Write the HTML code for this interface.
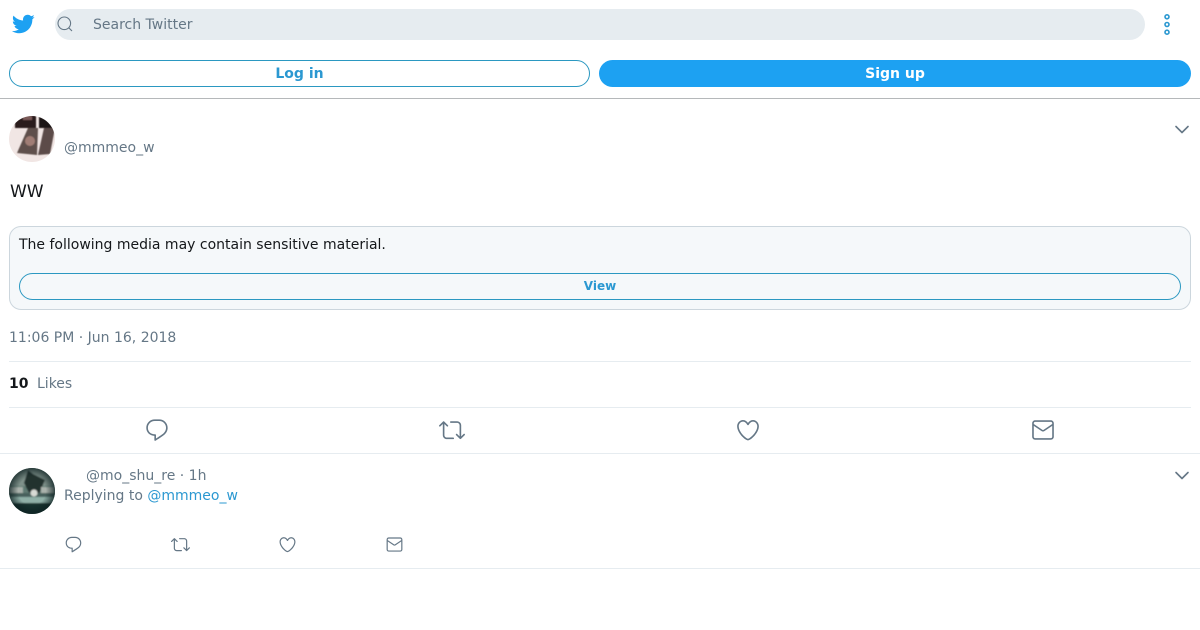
<!DOCTYPE html>
<html lang="en"><head><meta charset="utf-8"><title>Tweet</title>
<style>
html,body{margin:0;padding:0;background:#fff;width:1200px;height:630px;overflow:hidden}
body{position:relative;font-family:"DejaVu Sans",sans-serif;color:#14171a}
.a{position:absolute;white-space:nowrap}
.g{color:#657786}
.b{color:#2b98d1}
.line{position:absolute;height:1px;background:#e6ecf0}
svg{position:absolute;display:block}
.ic{fill:#657786}
</style></head><body>
<svg style="left:11px;top:12px" width="24" height="24" viewBox="0 0 24 24"><path fill="#1da1f2" d="M23.643 4.937c-.835.37-1.732.62-2.675.727.962-.576 1.7-1.49 2.048-2.578-.9.534-1.897.922-2.958 1.13-.85-.904-2.06-1.47-3.4-1.47-2.572 0-4.658 2.086-4.658 4.66 0 .364.042.718.12 1.06-3.873-.195-7.304-2.05-9.602-4.868-.4.69-.63 1.49-.63 2.342 0 1.616.823 3.043 2.072 3.878-.764-.025-1.482-.234-2.11-.583v.06c0 2.257 1.605 4.14 3.737 4.568-.392.106-.803.162-1.227.162-.3 0-.593-.028-.877-.082.593 1.85 2.313 3.198 4.352 3.234-1.595 1.25-3.604 1.995-5.786 1.995-.376 0-.747-.022-1.112-.065 2.062 1.323 4.51 2.093 7.14 2.093 8.57 0 13.255-7.098 13.255-13.254 0-.2-.005-.402-.014-.602.91-.658 1.7-1.477 2.323-2.41z"/></svg>
<div class="a" style="left:55px;top:9px;width:1090px;height:31px;border-radius:16px;background:#e6ecf0"></div>
<svg style="left:56px;top:15px" width="18" height="18" viewBox="0 0 18 18" fill="none" stroke="#657786" stroke-width="1.1"><circle cx="8.3" cy="8.3" r="6.3"/><path d="M12.8 12.8l3.2 3.2"/></svg>
<div class="a g" style="left:93px;top:16px;font-size:14px;line-height:18px">Search Twitter</div>
<svg style="left:1161px;top:13px" width="12" height="24" viewBox="0 0 12 24" fill="none" stroke="#2b98d1" stroke-width="1.6"><circle cx="6" cy="3.8" r="2"/><circle cx="6" cy="11.5" r="2"/><circle cx="6" cy="19.2" r="2"/></svg>

<div class="a" style="left:9px;top:60px;width:579px;height:25px;border:1px solid #2b98c1;border-radius:14px;text-align:center;font-size:14px;font-weight:700;line-height:27px;color:#2b98d1">Log in</div>
<div class="a" style="left:599px;top:60px;width:592px;height:27px;border-radius:14px;background:#1da1f2;text-align:center;font-size:14px;font-weight:700;line-height:29px;color:#fff">Sign up</div>
<div class="line" style="left:0;top:98px;width:1200px;background:#b5b8ba"></div>

<svg style="left:9px;top:116px" width="46" height="46" viewBox="0 0 46 46"><defs><clipPath id="c1"><circle cx="23" cy="23" r="23"/></clipPath><filter id="f1"><feGaussianBlur stdDeviation=".6"/></filter></defs><g clip-path="url(#c1)"><rect width="46" height="46" fill="#f1e6e4"/><g filter="url(#f1)"><rect x="6" y="-2" width="21" height="14" fill="#2a1a1e"/><rect x="30" y="-2" width="16" height="14" fill="#1f1518"/><rect x="14" y="0" width="9" height="4" fill="#7a5a58"/><path d="M19 12L29 12 28 39 8 37Z" fill="#5f504b"/><path d="M35 12L46 12 41 38 29 39Z" fill="#5b4c48"/><circle cx="21" cy="25" r="5" fill="#a07d74"/></g></g></svg>
<div class="a g" style="left:64px;top:139px;font-size:14px;line-height:18px">@mmmeo_w</div>
<svg style="left:1174px;top:124px" width="16" height="12" viewBox="0 0 16 12" fill="none" stroke="#657786" stroke-width="1.6" stroke-linecap="round" stroke-linejoin="round"><path d="M2 2.5l6 6 6-6"/></svg>

<div class="a" style="left:10px;top:182px;font-size:17px;line-height:20px">WW</div>

<div class="a" style="left:9px;top:226px;width:1180px;height:82px;border:1px solid #ccd6dd;border-radius:12px;background:#f5f8fa"></div>
<div class="a" style="left:19px;top:236px;font-size:14px;line-height:18px">The following media may contain sensitive material.</div>
<div class="a" style="left:19px;top:273px;width:1160px;height:25px;border:1px solid #2b98c1;border-radius:14px;text-align:center;font-size:12px;font-weight:700;line-height:25px;color:#2b98d1">View</div>

<div class="a g" style="left:9px;top:329px;font-size:14px;line-height:18px">11:06 PM · Jun 16, 2018</div>
<div class="line" style="left:9px;top:361px;width:1182px"></div>
<div class="a" style="left:9px;top:375px;font-size:14px;line-height:18px;font-weight:700">10</div>
<div class="a g" style="left:37px;top:375px;font-size:14px;line-height:18px">Likes</div>
<div class="line" style="left:9px;top:407px;width:1182px"></div>

<svg class="ic" style="left:144px;top:417px" width="26" height="26" viewBox="0 0 24 24"><path d="M14.046 2.242l-4.148-.01h-.002c-4.374 0-7.8 3.427-7.8 7.802 0 4.098 3.186 7.206 7.465 7.37v3.828c0 .108.044.286.12.403.142.225.384.347.632.347.138 0 .277-.038.402-.118.264-.168 6.473-4.14 8.088-5.506 1.902-1.61 3.04-3.97 3.043-6.312v-.017c-.006-4.367-3.43-7.787-7.8-7.788zm3.787 12.972c-1.134.96-4.862 3.405-6.772 4.643V16.67c0-.414-.335-.75-.75-.75h-.396c-3.66 0-6.318-2.476-6.318-5.886 0-3.534 2.768-6.302 6.3-6.302l4.147.01h.002c3.532 0 6.3 2.766 6.302 6.296-.003 1.91-.942 3.844-2.514 5.176z"/></svg>
<svg class="ic" style="left:439px;top:417px" width="26" height="26" viewBox="0 0 24 24"><path d="M23.77 15.67c-.292-.293-.767-.293-1.06 0l-2.22 2.22V7.65c0-2.068-1.683-3.75-3.75-3.75h-5.85c-.414 0-.75.336-.75.75s.336.75.75.75h5.85c1.24 0 2.25 1.01 2.25 2.25v10.24l-2.22-2.22c-.293-.293-.768-.293-1.06 0s-.294.768 0 1.06l3.5 3.5c.145.147.337.22.53.22s.383-.072.53-.22l3.5-3.5c.294-.292.294-.767 0-1.06zm-10.66 3.28H7.26c-1.24 0-2.25-1.01-2.25-2.25V6.46l2.22 2.22c.148.147.34.22.532.22s.384-.073.53-.22c.293-.293.293-.768 0-1.06l-3.5-3.5c-.293-.294-.768-.294-1.06 0l-3.5 3.5c-.294.292-.294.767 0 1.06s.767.293 1.06 0l2.22-2.22V16.7c0 2.068 1.683 3.75 3.75 3.75h5.85c.414 0 .75-.336.75-.75s-.337-.75-.75-.75z"/></svg>
<svg class="ic" style="left:735px;top:417px" width="26" height="26" viewBox="0 0 24 24"><path d="M12 21.638h-.014C9.403 21.59 1.95 14.856 1.95 8.478c0-3.064 2.525-5.754 5.403-5.754 2.29 0 3.83 1.58 4.646 2.73.814-1.148 2.354-2.73 4.645-2.73 2.88 0 5.404 2.69 5.404 5.755 0 6.376-7.454 13.11-10.037 13.157H12zM7.354 4.225c-2.08 0-3.903 1.988-3.903 4.255 0 5.74 7.034 11.596 8.55 11.658 1.518-.062 8.55-5.917 8.55-11.658 0-2.267-1.823-4.255-3.902-4.255-2.528 0-3.94 2.936-3.952 2.965-.23.562-1.156.562-1.387 0-.014-.03-1.425-2.965-3.954-2.965z"/></svg>
<svg class="ic" style="left:1030px;top:417px" width="26" height="26" viewBox="0 0 24 24"><path d="M19.25 3.018H4.75C3.233 3.018 2 4.252 2 5.77v12.495c0 1.518 1.233 2.753 2.75 2.753h14.5c1.517 0 2.75-1.235 2.75-2.753V5.77c0-1.518-1.233-2.752-2.75-2.752zm-14.5 1.5h14.5c.69 0 1.25.56 1.25 1.25v.714l-8.05 5.367c-.273.18-.626.182-.9-.002L3.5 6.482v-.714c0-.69.56-1.25 1.25-1.25zm14.5 14.998H4.75c-.69 0-1.25-.56-1.25-1.25V8.24l7.24 4.83c.383.256.822.384 1.26.384.44 0 .877-.128 1.26-.383l7.24-4.83v10.022c0 .69-.56 1.25-1.25 1.25z"/></svg>
<div class="line" style="left:0;top:453px;width:1200px"></div>

<svg style="left:9px;top:468px" width="46" height="46" viewBox="0 0 46 46"><defs><clipPath id="c2"><circle cx="23" cy="23" r="23"/></clipPath><filter id="f2"><feGaussianBlur stdDeviation=".9"/></filter><radialGradient id="v2"><stop offset=".6" stop-color="#0c1f20" stop-opacity="0"/><stop offset="1" stop-color="#0c1f20" stop-opacity=".75"/></radialGradient></defs><g clip-path="url(#c2)"><rect width="46" height="46" fill="#5f7a72"/><g filter="url(#f2)"><rect y="0" width="46" height="18" fill="#7f918a"/><path d="M19 2L24 6 36 12 30 26 22 28 15 15Z" fill="#22302f"/><rect y="19" width="14" height="6" fill="#aab2ac"/><rect x="32" y="19" width="14" height="6" fill="#aab2ac"/><rect y="25" width="46" height="4" fill="#46615c"/><rect y="29" width="46" height="6" fill="#8fb0a7"/><rect y="35" width="46" height="11" fill="#12302f"/><circle cx="25" cy="25" r="3.5" fill="#d8dbd5"/></g><rect width="46" height="46" fill="url(#v2)"/></g></svg>
<div class="a g" style="left:86px;top:467px;font-size:14px;line-height:18px">@mo_shu_re · 1h</div>
<div class="a g" style="left:64px;top:487px;font-size:14px;line-height:18px">Replying to <span class="b">@mmmeo_w</span></div>
<svg style="left:1174px;top:470px" width="16" height="12" viewBox="0 0 16 12" fill="none" stroke="#657786" stroke-width="1.6" stroke-linecap="round" stroke-linejoin="round"><path d="M2 2.5l6 6 6-6"/></svg>

<svg class="ic" style="left:64px;top:535px" width="19" height="19" viewBox="0 0 24 24"><path d="M14.046 2.242l-4.148-.01h-.002c-4.374 0-7.8 3.427-7.8 7.802 0 4.098 3.186 7.206 7.465 7.37v3.828c0 .108.044.286.12.403.142.225.384.347.632.347.138 0 .277-.038.402-.118.264-.168 6.473-4.14 8.088-5.506 1.902-1.61 3.04-3.97 3.043-6.312v-.017c-.006-4.367-3.43-7.787-7.8-7.788zm3.787 12.972c-1.134.96-4.862 3.405-6.772 4.643V16.67c0-.414-.335-.75-.75-.75h-.396c-3.66 0-6.318-2.476-6.318-5.886 0-3.534 2.768-6.302 6.3-6.302l4.147.01h.002c3.532 0 6.3 2.766 6.302 6.296-.003 1.91-.942 3.844-2.514 5.176z"/></svg>
<svg class="ic" style="left:171px;top:535px" width="19" height="19" viewBox="0 0 24 24"><path d="M23.77 15.67c-.292-.293-.767-.293-1.06 0l-2.22 2.22V7.65c0-2.068-1.683-3.75-3.75-3.75h-5.85c-.414 0-.75.336-.75.75s.336.75.75.75h5.85c1.24 0 2.25 1.01 2.25 2.25v10.24l-2.22-2.22c-.293-.293-.768-.293-1.06 0s-.294.768 0 1.06l3.5 3.5c.145.147.337.22.53.22s.383-.072.53-.22l3.5-3.5c.294-.292.294-.767 0-1.06zm-10.66 3.28H7.26c-1.24 0-2.25-1.01-2.25-2.25V6.46l2.22 2.22c.148.147.34.22.532.22s.384-.073.53-.22c.293-.293.293-.768 0-1.06l-3.5-3.5c-.293-.294-.768-.294-1.06 0l-3.5 3.5c-.294.292-.294.767 0 1.06s.767.293 1.06 0l2.22-2.22V16.7c0 2.068 1.683 3.75 3.75 3.75h5.85c.414 0 .75-.336.75-.75s-.337-.75-.75-.75z"/></svg>
<svg class="ic" style="left:278px;top:535px" width="19" height="19" viewBox="0 0 24 24"><path d="M12 21.638h-.014C9.403 21.59 1.95 14.856 1.95 8.478c0-3.064 2.525-5.754 5.403-5.754 2.29 0 3.83 1.58 4.646 2.73.814-1.148 2.354-2.73 4.645-2.73 2.88 0 5.404 2.69 5.404 5.755 0 6.376-7.454 13.11-10.037 13.157H12zM7.354 4.225c-2.08 0-3.903 1.988-3.903 4.255 0 5.74 7.034 11.596 8.55 11.658 1.518-.062 8.55-5.917 8.55-11.658 0-2.267-1.823-4.255-3.902-4.255-2.528 0-3.94 2.936-3.952 2.965-.23.562-1.156.562-1.387 0-.014-.03-1.425-2.965-3.954-2.965z"/></svg>
<svg class="ic" style="left:385px;top:535px" width="19" height="19" viewBox="0 0 24 24"><path d="M19.25 3.018H4.75C3.233 3.018 2 4.252 2 5.77v12.495c0 1.518 1.233 2.753 2.75 2.753h14.5c1.517 0 2.75-1.235 2.75-2.753V5.77c0-1.518-1.233-2.752-2.75-2.752zm-14.5 1.5h14.5c.69 0 1.25.56 1.25 1.25v.714l-8.05 5.367c-.273.18-.626.182-.9-.002L3.5 6.482v-.714c0-.69.56-1.25 1.25-1.25zm14.5 14.998H4.75c-.69 0-1.25-.56-1.25-1.25V8.24l7.24 4.83c.383.256.822.384 1.26.384.44 0 .877-.128 1.26-.383l7.24-4.83v10.022c0 .69-.56 1.25-1.25 1.25z"/></svg>
<div class="line" style="left:0;top:568px;width:1200px"></div>
</body></html>
